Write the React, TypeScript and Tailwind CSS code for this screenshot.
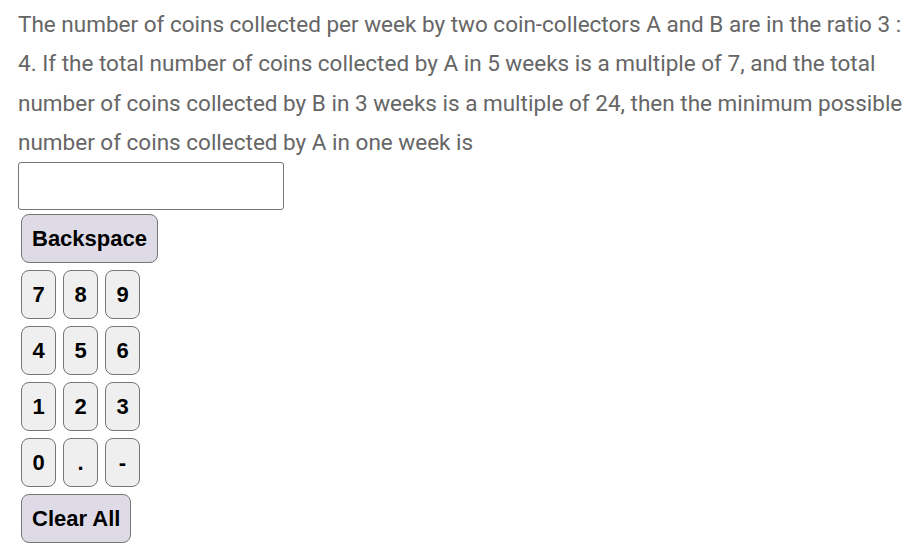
const ROWS = [
  ["7", "8", "9"],
  ["4", "5", "6"],
  ["1", "2", "3"],
  ["0", ".", "-"],
];

export default function App() {
  return (
    <div className="min-h-screen bg-white pl-[18px] pr-[6px] pt-[5px]">
      <p className="text-[22.5px] leading-[39.25px] text-[#666666] font-['Roboto',sans-serif]">
        The number of coins collected per week by two coin-collectors A and B are in the ratio 3 : 4. If the total
        number of coins collected by A in 5 weeks is a multiple of 7, and the total number of coins collected by B in 3
        weeks is a multiple of 24, then the minimum possible number of coins collected by A in one week is
      </p>

      <div className="h-[48px] w-[266px] rounded-[3px] border border-[#767676] bg-white" />

      {/* Keypad */}
      <div className="ml-[3px] mt-[4px] flex flex-col items-start gap-[7px] font-['Liberation_Sans',Arial,sans-serif] text-[22px] font-bold leading-[25px] text-black">
        <button className="h-[49px] rounded-[8px] border border-[#767676] bg-[#dedbe6] px-[10px]">Backspace</button>
        {ROWS.map((row, i) => (
          <div key={i} className="flex gap-[7px]">
            {row.map((k) => (
              <button key={k} className="h-[49px] w-[35px] rounded-[8px] border border-[#767676] bg-[#efefef]">
                {k}
              </button>
            ))}
          </div>
        ))}
        <button className="h-[49px] rounded-[8px] border border-[#767676] bg-[#dedbe6] px-[10px]">Clear All</button>
      </div>
    </div>
  );
}
